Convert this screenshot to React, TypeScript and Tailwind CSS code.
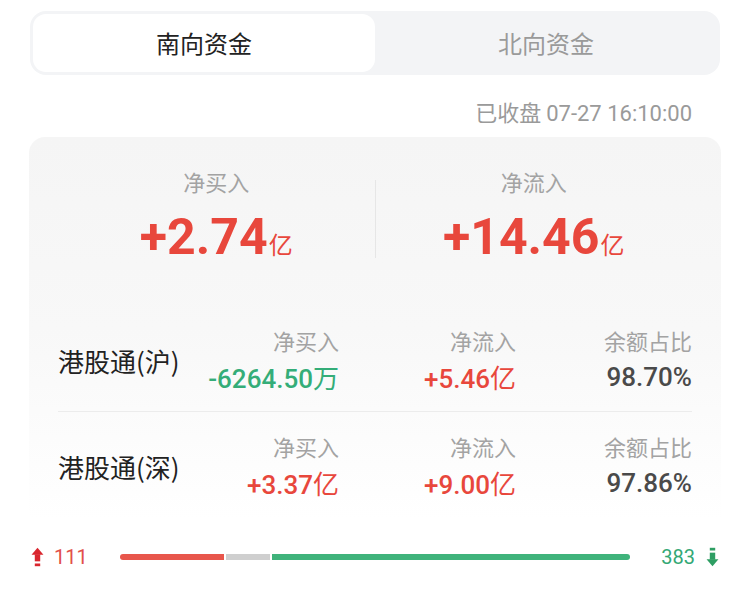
import { useState } from "react";

const cjk = "font-['Noto_Sans_CJK_SC',sans-serif]";
const num = "font-['Roboto','Noto_Sans_CJK_SC',sans-serif]";

const rows = [
  { name: "港股通(沪)", buy: "-6264.50", buyUnit: "万", buyUp: false, flow: "+5.46", ratio: "98.70%" },
  { name: "港股通(深)", buy: "+3.37", buyUnit: "亿", buyUp: true, flow: "+9.00", ratio: "97.86%" },
];

function UpArrow() {
  return (
    <svg width="13" height="22" viewBox="0 0 12 20" className="text-[#d9262e]">
      <polygon points="0.5,8 6,1.5 11.5,8" fill="currentColor" />
      <rect x="3.5" y="7.5" width="5" height="6.5" fill="currentColor" />
      <rect x="3.5" y="16" width="5" height="2.5" fill="currentColor" />
    </svg>
  );
}

function DownArrow() {
  return (
    <svg width="13" height="22" viewBox="0 0 12 20" className="text-[#2e9e63]">
      <rect x="3.5" y="1.5" width="5" height="2.5" fill="currentColor" />
      <rect x="3.5" y="6" width="5" height="6.5" fill="currentColor" />
      <polygon points="0.5,12 6,18.5 11.5,12" fill="currentColor" />
    </svg>
  );
}

function Cell({ label, children, color }: { label: string; children: React.ReactNode; color: string }) {
  return (
    <div className="flex flex-col items-end">
      <div className={`${cjk} h-[30px] leading-[30px] text-[22px] text-[#a3a3a3]`}>{label}</div>
      <div className={`${num} mt-[4px] h-[36px] leading-[36px] text-[26px] font-medium whitespace-nowrap ${color}`}>
        {children}
      </div>
    </div>
  );
}

export default function App() {
  const [tab, setTab] = useState(0);

  return (
    <div className={`w-[750px] h-[604px] bg-white pt-[11px] ${cjk}`}>
      {/* tabs */}
      <div className="mx-[30px] h-[64px] rounded-[16px] bg-[#f3f4f6] p-[3px] grid grid-cols-2">
        {["南向资金", "北向资金"].map((t, i) => (
          <button
            key={t}
            onClick={() => setTab(i)}
            className={`rounded-[13px] text-[24px] flex items-center justify-center ${
              tab === i ? "bg-white text-[#222]" : "text-[#9a9a9a]"
            }`}
          >
            {t}
          </button>
        ))}
      </div>

      <div className="mt-[21px] h-[30px] leading-[30px] pr-[58px] text-right text-[22px] text-[#9a9a9a]">
        已收盘 <span className={num}>07-27 16:10:00</span>
      </div>

      {/* card */}
      <div className="mt-[11px] mx-[29px] px-[29px] pb-[18px] rounded-t-[16px] bg-gradient-to-b from-[#f5f5f5] via-[#f8f8f8] to-[#ffffff]">
        <div className="flex pt-[29px]">
          <div className="flex-1 flex flex-col items-center">
            <div className="h-[30px] leading-[30px] text-[22px] text-[#a3a3a3]">净买入</div>
            <div className="mt-[13px] h-[56px] flex items-baseline text-[#e8473c]">
              <span className={`${num} text-[50px] font-bold leading-[56px]`}>+2.74</span>
              <span className="text-[24px] ml-[1px]">亿</span>
            </div>
          </div>
          <div className="w-px bg-[#e6e6e6] mt-[14px] mb-[7px]" />
          <div className="flex-1 flex flex-col items-center">
            <div className="h-[30px] leading-[30px] text-[22px] text-[#a3a3a3]">净流入</div>
            <div className="mt-[13px] h-[56px] flex items-baseline text-[#e8473c]">
              <span className={`${num} text-[50px] font-bold leading-[56px]`}>+14.46</span>
              <span className="text-[24px] ml-[1px]">亿</span>
            </div>
          </div>
        </div>

        <div className="mt-[43px]">
          {rows.map((r, i) => (
            <div
              key={r.name}
              className={`grid grid-cols-[minmax(0,1fr)_177px_177px_176px] items-center ${
                i === 0 ? "pt-[17px] pb-[16px] border-b border-[#ececec]" : "pt-[19px]"
              }`}
            >
              <div className="text-[26px] text-[#222] whitespace-nowrap">{r.name}</div>
              <Cell label="净买入" color={r.buyUp ? "text-[#e8473c]" : "text-[#34ad78]"}>
                {r.buy}
                <span className={`${cjk} font-normal`}>{r.buyUnit}</span>
              </Cell>
              <Cell label="净流入" color="text-[#e8473c]">
                {r.flow}
                <span className={`${cjk} font-normal`}>亿</span>
              </Cell>
              <Cell label="余额占比" color="text-[#4a4a4a]">
                {r.ratio}
              </Cell>
            </div>
          ))}
        </div>
      </div>

      {/* up / down bar */}
      <div className="mt-[26px] h-[24px] px-[31px] flex items-center">
        <UpArrow />
        <span className={`${num} ml-[10px] text-[20px] text-[#e2504a]`}>111</span>
        <div className="ml-[32px] flex-1 flex gap-[2px] h-[6px]">
          <div className="grow-[105] basis-0 rounded-l-full bg-[#e8564c]" />
          <div className="grow-[45] basis-0 bg-[#cfcfcf]" />
          <div className="grow-[361] basis-0 rounded-r-full bg-[#3fb37b]" />
        </div>
        <span className={`${num} ml-[31px] text-[20px] text-[#34a875]`}>383</span>
        <span className="ml-[11px] flex">
          <DownArrow />
        </span>
      </div>
    </div>
  );
}
